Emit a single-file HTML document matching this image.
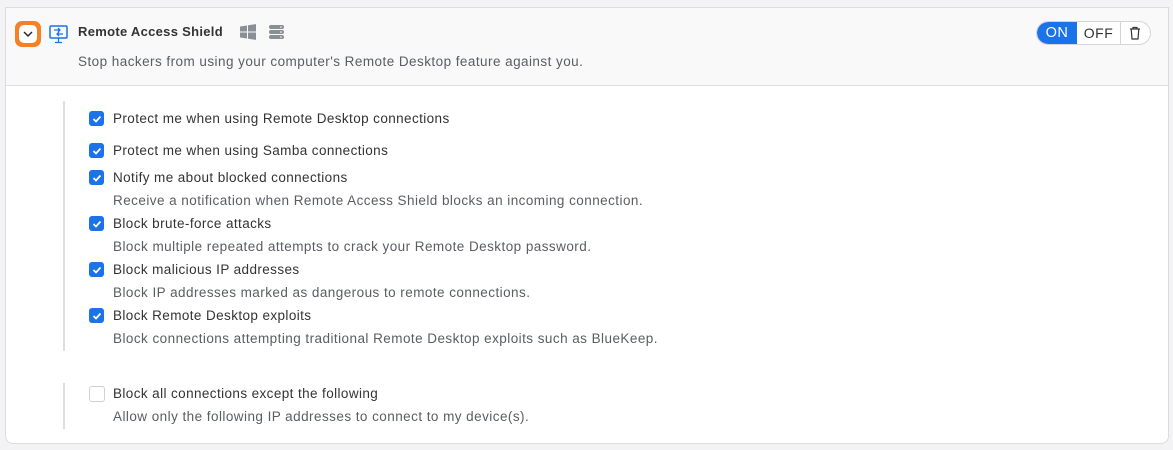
<!DOCTYPE html><html><head><style>
body{margin:0;width:1173px;height:450px;background:#f3f3f5;font-family:"Liberation Sans",sans-serif;position:relative;overflow:hidden}
.card{position:absolute;left:5px;top:7px;width:1162px;height:435px;border:1px solid #dcdcdf;border-radius:0 0 8px 8px;background:#fff;overflow:hidden}
.hd{position:absolute;left:0;top:0;width:100%;height:77px;background:#f9f9fa;border-bottom:1px solid #dcdcdf}
.a{position:absolute;white-space:nowrap}
.t{font-size:13.5px;color:#333;letter-spacing:0.4px}
.d{font-size:13.5px;color:#5a5d62;letter-spacing:0.45px}
.cb{position:absolute;left:83px;width:15px;height:15px;border-radius:3px;background:#1a73e8}
.cb svg{position:absolute;left:2.5px;top:2.5px}
.vl{position:absolute;left:57px;width:2px;background:#dedee2}
</style></head><body>
<div class="card">
<div class="hd"></div>
<div class="a" style="left:9px;top:13px;width:26px;height:26px;border-radius:7px;background:#f58025"></div>
<div class="a" style="left:13px;top:17px;width:18px;height:18px;border-radius:5px;background:#fff"><svg width="18" height="18"><path d="M5 7l4 4 4-4" stroke="#222" stroke-width="1.4" fill="none"/></svg></div>
<svg class="a" style="left:42px;top:15px" width="22" height="22" viewBox="0 0 22 22"><rect x="2" y="3" width="17" height="12" rx="1" fill="none" stroke="#1a73e8" stroke-width="1.5"/><path d="M10.5 15v4M7 19.5h7M6 7h6M10 5l2 2-2 2M15 11H9M11 9l-2 2 2 2" stroke="#1a73e8" stroke-width="1.3" fill="none"/></svg>
<div class="a" style="left:72px;top:16px;font-size:13px;font-weight:bold;color:#333;letter-spacing:0.3px">Remote Access Shield</div>
<svg class="a" style="left:233px;top:15px" width="18" height="18"><path d="M1 3.5l7-1v6H1zM9 2.3l8-1.2v7.4H9zM1 9.5h7v6l-7-1zM9 9.5h8v7.4l-8-1.2z" fill="#8a8f95"/></svg>
<svg class="a" style="left:262px;top:15px" width="18" height="18"><rect x="1" y="2" width="15" height="4" rx="2" fill="#8a8f95"/><rect x="1" y="7" width="15" height="4" rx="2" fill="#8a8f95"/><rect x="1" y="12" width="15" height="4" rx="2" fill="#8a8f95"/><circle cx="13" cy="4" r=".8" fill="#fff"/><circle cx="13" cy="9" r=".8" fill="#fff"/><circle cx="13" cy="14" r=".8" fill="#fff"/></svg>
<div class="a d" style="left:72px;top:46px">Stop hackers from using your computer's Remote Desktop feature against you.</div>
<div class="a" style="left:1030px;top:13px;width:113px;height:22px;border:1px solid #d5d5d9;border-radius:12px;background:#fff;overflow:hidden">
<div class="a" style="left:0;top:0;width:40px;height:22px;background:#1a73e8;color:#fff;font-size:14.5px;line-height:22px;text-align:center;border-radius:12px 0 0 12px;letter-spacing:.5px">ON</div>
<div class="a" style="left:40px;top:0;width:43px;height:22px;color:#333;font-size:14px;line-height:22px;text-align:center;border-right:1px solid #d5d5d9;letter-spacing:.5px">OFF</div>
<svg class="a" style="left:91px;top:4px" width="14" height="14"><path d="M2 3h10M5 3V1.5h4V3M3.2 3l.8 10h6l.8-10" stroke="#333" stroke-width="1.2" fill="none"/></svg></div>
<div class="vl" style="top:93px;height:250px"></div>
<div class="vl" style="top:375px;height:46px"></div>
<div class="cb" style="top:103px"><svg width="10" height="10"><path d="M1.5 5l2.5 2.5 4.5-5" stroke="#fff" stroke-width="1.8" fill="none"/></svg></div>
<div class="a t" style="left:107px;top:103px">Protect me when using Remote Desktop connections</div>
<div class="cb" style="top:135px"><svg width="10" height="10"><path d="M1.5 5l2.5 2.5 4.5-5" stroke="#fff" stroke-width="1.8" fill="none"/></svg></div>
<div class="a t" style="left:107px;top:135px">Protect me when using Samba connections</div>
<div class="cb" style="top:162px"><svg width="10" height="10"><path d="M1.5 5l2.5 2.5 4.5-5" stroke="#fff" stroke-width="1.8" fill="none"/></svg></div>
<div class="a t" style="left:107px;top:162px">Notify me about blocked connections</div>
<div class="a d" style="left:107px;top:185px">Receive a notification when Remote Access Shield blocks an incoming connection.</div>
<div class="cb" style="top:208px"><svg width="10" height="10"><path d="M1.5 5l2.5 2.5 4.5-5" stroke="#fff" stroke-width="1.8" fill="none"/></svg></div>
<div class="a t" style="left:107px;top:208px">Block brute-force attacks</div>
<div class="a d" style="left:107px;top:231px">Block multiple repeated attempts to crack your Remote Desktop password.</div>
<div class="cb" style="top:254px"><svg width="10" height="10"><path d="M1.5 5l2.5 2.5 4.5-5" stroke="#fff" stroke-width="1.8" fill="none"/></svg></div>
<div class="a t" style="left:107px;top:254px">Block malicious IP addresses</div>
<div class="a d" style="left:107px;top:277px">Block IP addresses marked as dangerous to remote connections.</div>
<div class="cb" style="top:300px"><svg width="10" height="10"><path d="M1.5 5l2.5 2.5 4.5-5" stroke="#fff" stroke-width="1.8" fill="none"/></svg></div>
<div class="a t" style="left:107px;top:300px">Block Remote Desktop exploits</div>
<div class="a d" style="left:107px;top:323px">Block connections attempting traditional Remote Desktop exploits such as BlueKeep.</div>
<div class="cb" style="top:378px;background:#fff;border:1px solid #d0d0d4;width:14px;height:14px"></div>
<div class="a t" style="left:107px;top:378px">Block all connections except the following</div>
<div class="a d" style="left:107px;top:401px">Allow only the following IP addresses to connect to my device(s).</div>
</div>
</body></html>
